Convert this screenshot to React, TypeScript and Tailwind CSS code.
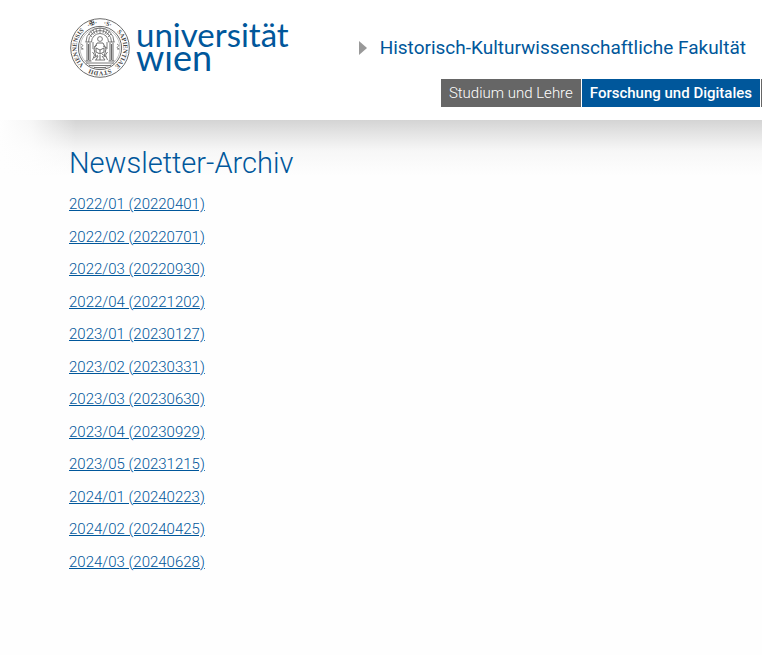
const issues = [
  "2022/01 (20220401)",
  "2022/02 (20220701)",
  "2022/03 (20220930)",
  "2022/04 (20221202)",
  "2023/01 (20230127)",
  "2023/02 (20230331)",
  "2023/03 (20230630)",
  "2023/04 (20230929)",
  "2023/05 (20231215)",
  "2024/01 (20240223)",
  "2024/02 (20240425)",
  "2024/03 (20240628)",
];

function Seal() {
  return (
    <svg viewBox="0 0 60 60" className="size-15 shrink-0" fill="none" stroke="#6b6b6b" aria-hidden="true">
      <circle cx="30" cy="30" r="29.3" strokeWidth="1" />
      <circle cx="30" cy="30" r="21.6" strokeWidth="1" />
      <circle cx="30" cy="30" r="20" strokeWidth="0.4" />
      <defs>
        <path id="seal-ring" d="M30 6.6a23.4 23.4 0 1 1 -0.01 0" />
      </defs>
      <g fill="#444444" stroke="none" fontSize="6.3" fontWeight="700" fontFamily="Liberation Serif, serif" textAnchor="middle">
        <text><textPath href="#seal-ring" startOffset="5%">·S·</textPath></text>
        <text><textPath href="#seal-ring" startOffset="26%">SAPIENTIAE</textPath></text>
        <text><textPath href="#seal-ring" startOffset="50%">STVDII</textPath></text>
        <text><textPath href="#seal-ring" startOffset="75%">VIENNENSIS</textPath></text>
        <text><textPath href="#seal-ring" startOffset="95%">·✠·</textPath></text>
      </g>
      {/* canopy and columns */}
      <path d="M16 24a14 14 0 0 1 28 0M18.5 24a11.5 11.5 0 0 1 23 0M21.5 24a8.5 8.5 0 0 1 17 0" strokeWidth="0.9" />
      <path d="M19 16l3 3M23 12l2 4M30 10v5M37 12l-2 4M41 16l-3 3M20.5 13.5l3 3.5M26 11l1 4M34 11l-1 4M39.5 13.5l-3 3.5" strokeWidth="0.8" />
      <path d="M15.5 24h6M38.5 24h6M17 25v18M20 25v18M40 25v18M43 25v18M15.5 43h6M38.5 43h6M18.5 26v16M41.5 26v16" strokeWidth="1" />
      <path d="M16 45h28M19 47.5h22M24 49.5h12" strokeWidth="0.9" />
      {/* seated scholar with book and listeners */}
      <circle cx="30" cy="21" r="2.4" strokeWidth="0.9" />
      <path d="M27 25l-3 6 2 8M33 25l3 6-2 8M27 25h6M26 30l4 2 4-2v4l-4 2-4-2zM30 32v4M28 38l-2 4M32 38l3 4M30 37v5" strokeWidth="1" />
      <path d="M23 24v7M37 24v7M22.5 34l2 3-2 5M37.5 34l-2 3 2 5M25 42h10M24 29l3-2M33 28l4 2M24 40l4-3M32 36l4 3" strokeWidth="0.9" />
      <path d="M11 26l2 1.5-2 2 2 1.5M11 31h2.5M47 26l2 1.5-2 2 2 1.5M47 31h2.5" strokeWidth="0.8" />
    </svg>
  );
}

export default function App() {
  return (
    <div className="min-h-screen overflow-x-hidden bg-[#fefefe] font-[Roboto,sans-serif] text-[#00579b]">
      <header className="flex h-30 justify-between bg-white pl-[70px]">
        <a href="#" aria-label="Universität Wien" className="flex gap-1.5 pt-[18px]">
          <Seal />
          <span className="pt-[5px] font-[Lato,sans-serif] leading-[23px]">
            <span className="block text-[33px]">universität</span>
            <span className="block text-[36px]">wıen</span>
          </span>
        </a>
        <div className="flex flex-col items-end pt-9">
          <a href="#" className="mr-4 flex items-center gap-[13px] text-[19px] leading-6 whitespace-nowrap">
            <svg viewBox="0 0 8 14" className="h-3.5 w-2" fill="#999999" aria-hidden="true">
              <path d="M0 0l8 7-8 7z" />
            </svg>
            Historisch-Kulturwissenschaftliche Fakultät
          </a>
          <nav className="mt-[19px] flex gap-px border-r border-[#666666] pr-px text-[15px] leading-7 whitespace-nowrap text-white">
            <a href="#" className="bg-[#666666] px-2 font-light">Studium und Lehre</a>
            <a href="#" aria-current="page" className="bg-[#00579b] px-2 font-medium">Forschung und Digitales</a>
          </nav>
        </div>
      </header>
      <main className="bg-[linear-gradient(to_right,#fefefe_0px,#fefefecc_32px,transparent_76px),linear-gradient(to_bottom,#d4d4d4_0px,#e6e6e6_15px,#f7f7f7_31px,#fefefe_56px)] bg-no-repeat px-[69px] pt-6 pb-8">
        <h1 className="text-[29px] leading-[38px] font-light">Newsletter-Archiv</h1>
        <ul className="mt-[11px] flex flex-col items-start gap-2.5 text-[15px] leading-normal font-light">
          {issues.map((issue) => (
            <li key={issue}>
              <a href="#" className="underline">{issue}</a>
            </li>
          ))}
        </ul>
      </main>
    </div>
  );
}
